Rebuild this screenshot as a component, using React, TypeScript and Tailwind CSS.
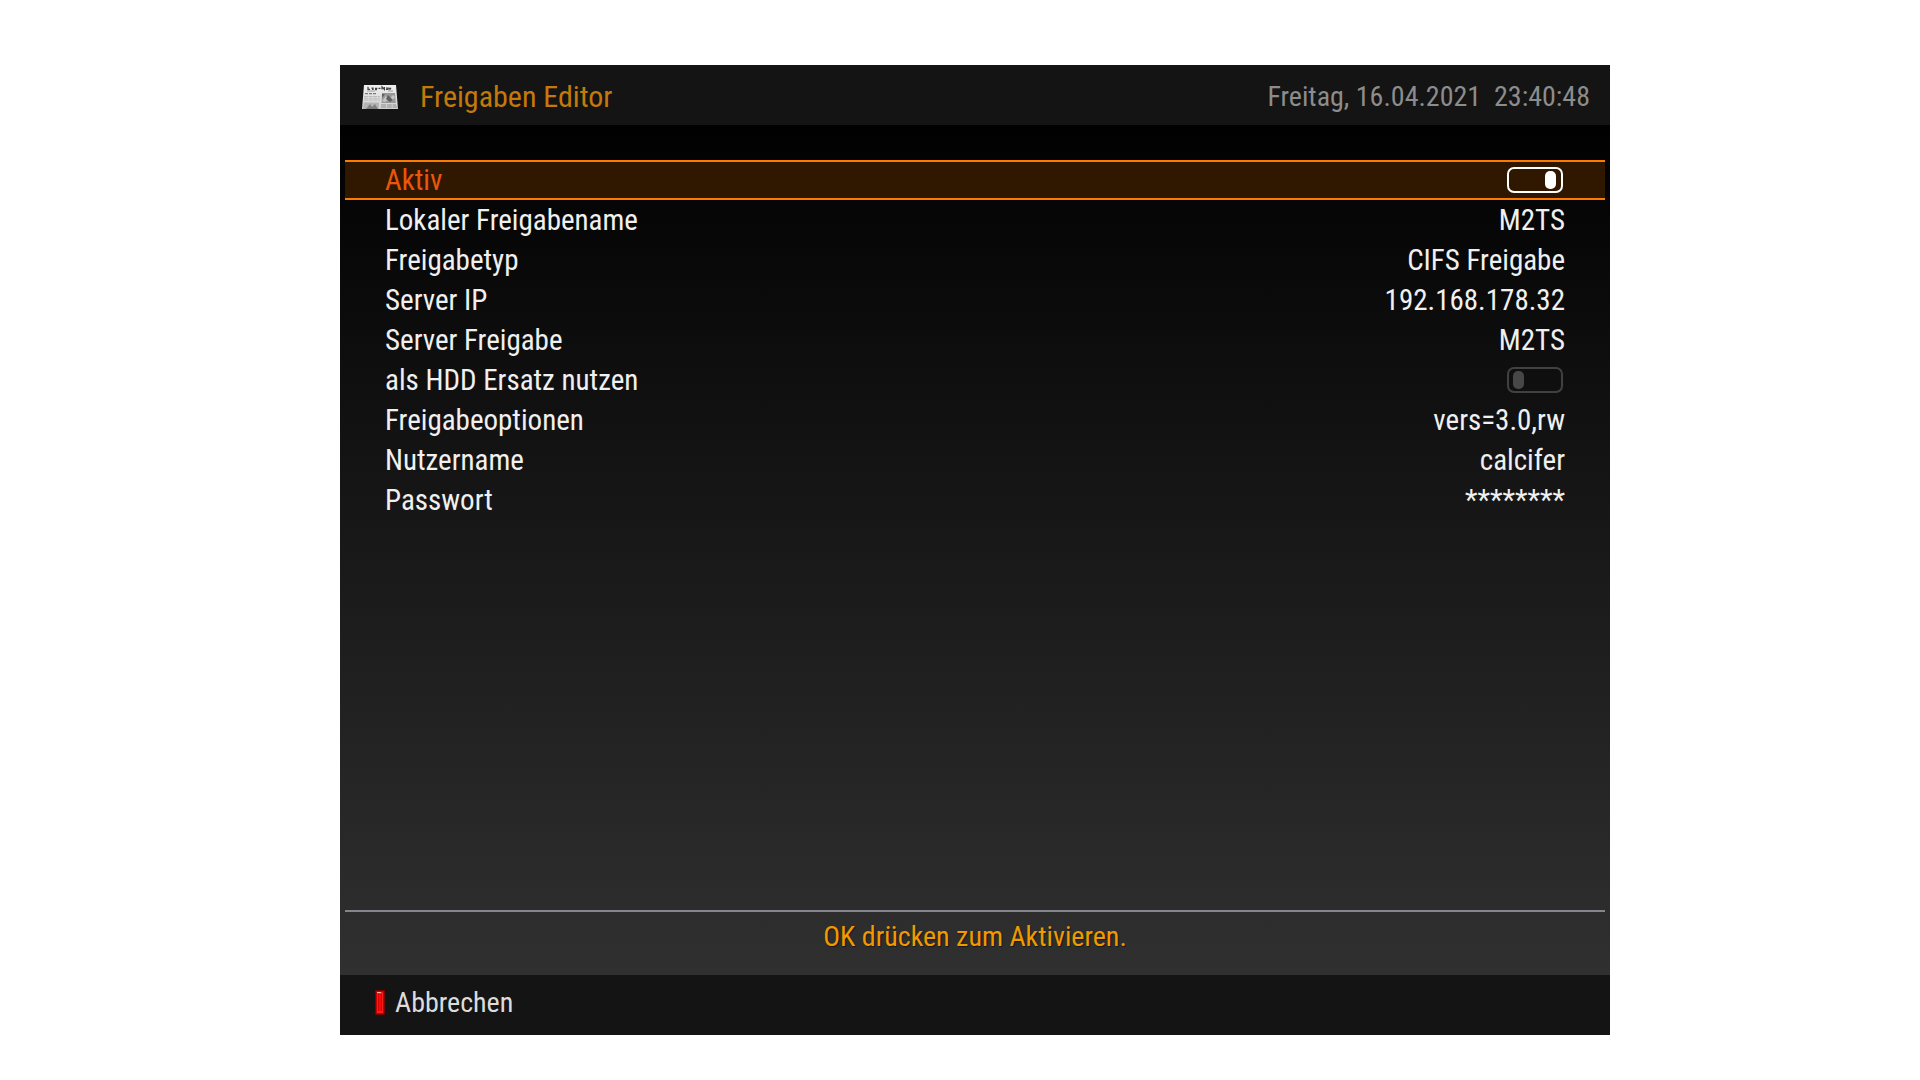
import React from "react";

type Field =
  | { kind: "toggle"; id: string; label: string; on: boolean; selected?: boolean }
  | { kind: "text"; id: string; label: string; value: string }
  | { kind: "select"; id: string; label: string; value: string; options: string[] };

const fields: Field[] = [
  { kind: "toggle", id: "active", label: "Aktiv", on: true, selected: true },
  { kind: "text", id: "name", label: "Lokaler Freigabename", value: "M2TS" },
  { kind: "select", id: "type", label: "Freigabetyp", value: "CIFS Freigabe", options: ["CIFS Freigabe"] },
  { kind: "text", id: "ip", label: "Server IP", value: "192.168.178.32" },
  { kind: "text", id: "share", label: "Server Freigabe", value: "M2TS" },
  { kind: "toggle", id: "hdd", label: "als HDD Ersatz nutzen", on: false },
  { kind: "text", id: "options", label: "Freigabeoptionen", value: "vers=3.0,rw" },
  { kind: "text", id: "user", label: "Nutzername", value: "calcifer" },
  { kind: "text", id: "password", label: "Passwort", value: "********" },
];

function Toggle({ id, on }: { id: string; on: boolean }) {
  return (
    <span className="relative mr-0.5 flex">
      <input
        id={id}
        type="checkbox"
        role="switch"
        defaultChecked={on}
        className="peer h-[26px] w-14 appearance-none rounded-[7px] border-2 border-[#414141] outline-none checked:border-white"
      />
      <span className="pointer-events-none absolute top-1 left-1.5 h-[18px] w-[11px] rounded-[5px] bg-[#474747] peer-checked:left-[38px] peer-checked:bg-white" />
    </span>
  );
}

function Control({ field }: { field: Field }) {
  if (field.kind === "toggle") return <Toggle id={field.id} on={field.on} />;
  if (field.kind === "select")
    return (
      <select
        id={field.id}
        defaultValue={field.value}
        className="h-10 min-w-0 flex-1 appearance-none bg-transparent text-right outline-none [text-align-last:right]"
      >
        {field.options.map((o) => (
          <option key={o}>{o}</option>
        ))}
      </select>
    );
  return (
    <input
      id={field.id}
      type="text"
      defaultValue={field.value}
      className="h-10 min-w-0 flex-1 bg-transparent text-right outline-none"
    />
  );
}

function Row({ field }: { field: Field }) {
  const selected = field.kind === "toggle" && field.selected;
  return (
    <div
      className={
        selected
          ? "flex h-10 items-center justify-between border-y-2 border-[#ff7b00] bg-[#301800] px-10 text-[#ea560a]"
          : "flex h-10 items-center justify-between px-10 text-[#f0f0f0]"
      }
    >
      <label htmlFor={field.id}>{field.label}</label>
      <Control field={field} />
    </div>
  );
}

function NewspaperIcon() {
  return (
    <svg viewBox="0 0 36 24" className="h-6 w-9" aria-hidden="true">
      <defs>
        <linearGradient id="paper" x1="0" y1="0" x2="0" y2="1">
          <stop offset="0" stopColor="#f0f0f0" />
          <stop offset="1" stopColor="#d0d0d0" />
        </linearGradient>
      </defs>
      <path d="M2 0H34L36 24H0Z" fill="url(#paper)" />
      <path
        d="M6 1.8v2.6h2M9.5 3.2h2.2M10 4.3h1.6M13 3.4h2.4M13 4.6h2M16.5 3.4h2M20 4.5v-2.6l2.4 2.6v-2.6M24 3.2h2v1.3h-2M27 2.8l1 1.6 1-1.6"
        fill="none"
        stroke="#404040"
        strokeWidth="1.2"
      />
      <path d="M5 6h8M26 6h5" stroke="#8a8a8a" strokeWidth=".8" />
      <path d="M3 8.7h11" stroke="#777" strokeWidth="1.2" strokeDasharray="3 1" />
      <path d="M2 11.5h16M2 13.2h16M2 15h16" stroke="#b0b0b0" strokeWidth=".8" strokeDasharray="4 .6" />
      <path d="M20 8h13l.8 10H19.5Z" fill="#989898" />
      <path d="M20 16l4-5 3 3 4-4 2 2-3 4-4-1-3 2Z" fill="#c5c5c5" />
      <path d="M26 10l5 5-3 2-4-3ZM20 9h3l-3 4Z" fill="#606060" />
      <path d="M2 17.5h15l-.3 6.5H1Z" fill="#b4b4b4" />
      <path d="M4 24l4-5 2 3 3-3 3 5Z" fill="#808080" />
      <path d="M19 20h15M19 22h16" stroke="#8f8f8f" strokeWidth="1" strokeDasharray="5 .8" />
    </svg>
  );
}

function RedKey() {
  return (
    <svg viewBox="0 0 10 25" className="h-[25px] w-2.5" aria-hidden="true">
      <rect width="10" height="25" fill="#7a0000" />
      <rect x="1" y="1" width="8" height="23" fill="#c40000" />
      <rect x="2" y="2" width="6" height="21" fill="#f02020" />
      <rect x="3" y="4" width="4" height="17" fill="#d80000" />
      <rect x="4" y="4" width="2" height="17" fill="#ff0505" />
      <rect x="2" y="2" width="4" height="1" fill="#ffaaaa" />
    </svg>
  );
}

export default function App() {
  return (
    <div className="flex min-h-screen bg-white pt-[65px] pr-[310px] pb-[45px] pl-[340px] font-['Roboto_Condensed',Roboto,sans-serif] text-[28px] leading-10">
      <main className="flex flex-1 flex-col">
        <header className="flex h-[60px] items-center justify-between bg-[#141414] pr-5 pl-[22px]">
          <div className="flex items-center gap-[22px] pt-[3px]">
            <NewspaperIcon />
            <h1 className="text-[30px] text-[#c47a0a]">Freigaben Editor</h1>
          </div>
          <time className="pt-[3px] whitespace-pre text-[#8c8c8c]">Freitag, 16.04.2021  23:40:48</time>
        </header>
        <div className="flex flex-1 flex-col bg-linear-to-b/srgb from-[#010101] to-[#303030] px-[5px]">
          <form className="flex flex-1 flex-col pt-[35px] text-[29px]">
            {fields.map((f) => (
              <Row key={f.id} field={f} />
            ))}
          </form>
          <p className="h-[65px] border-t-2 border-[#85858f] pt-[5px] text-center text-[#f09a00] [text-shadow:1px_1px_1px_#00000080]">
            OK drücken zum Aktivieren.
          </p>
        </div>
        <footer className="flex h-[60px] items-center bg-[#141414] pl-[35px]">
          <button type="button" className="flex items-center gap-2.5 pb-[5px] text-[#dcdcdc]">
            <RedKey />
            Abbrechen
          </button>
        </footer>
      </main>
    </div>
  );
}
